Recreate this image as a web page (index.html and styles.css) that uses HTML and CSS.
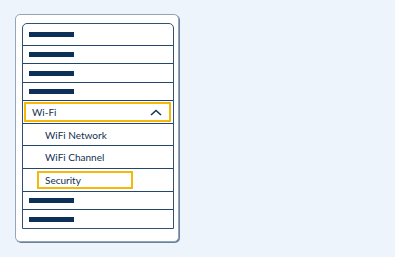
FILE: index.html
```html
<!DOCTYPE html>
<html>
<head>
<meta charset="utf-8">
<link rel="stylesheet" href="styles.css">
</head>
<body>
<div class="page">
  <div class="card">
    <div class="menu">
      <div class="row row-first"><span class="bar"></span></div>
      <div class="row row-bar"><span class="bar"></span></div>
      <div class="row row-bar row-tall"><span class="bar"></span></div>
      <div class="row row-bar"><span class="bar"></span></div>
      <div class="row row-head">
        <div class="head-box">
          <span class="label">Wi-Fi</span>
          <svg class="chev" width="12" height="7" viewBox="0 0 12 7"><path d="M1 6 L6 1.5 L11 6" fill="none" stroke="#1b3558" stroke-width="1.6"/></svg>
        </div>
      </div>
      <div class="row row-sub row-sub-short"><span class="label sub-label">WiFi Network</span></div>
      <div class="row row-sub"><span class="label sub-label">WiFi Channel</span></div>
      <div class="row row-sub"><div class="sel-box"><span class="label">Security</span></div></div>
      <div class="row row-bar"><span class="bar"></span></div>
      <div class="row row-bar row-tall"><span class="bar"></span></div>
    </div>
  </div>
</div>
</body>
</html>
```
FILE: styles.css
```css
html, body {
  margin: 0;
  padding: 0;
  background: #edf4fc;
}
.page {
  width: 395px;
  height: 257px;
  padding: 14px 0 0 15px;
  box-sizing: border-box;
}
.card {
  width: 164px;
  height: 228px;
  box-sizing: border-box;
  background: #fff;
  border: 1px solid #93a6b8;
  border-radius: 5px;
  box-shadow: 1px 1px 0 #6c8299;
  padding: 8px 5px 0 6px;
}
.menu {
  width: 152px;
  box-sizing: border-box;
  border: 1px solid #32506f;
  border-radius: 5px 5px 0 0;
  display: flex;
  flex-direction: column;
}
.row {
  display: flex;
  align-items: center;
  border-top: 1px solid #24466a;
  height: 17px;
  flex: none;
}
.row-first {
  border-top: none;
  height: 21px;
}
.row-tall {
  height: 18px;
}
.row-head,
.row-sub {
  height: 22px;
}
.row-sub-short {
  height: 21px;
}
.bar {
  display: block;
  width: 45px;
  height: 5px;
  margin-left: 6px;
  background: #0c3058;
}
.label {
  font-family: Lato, "Open Sans", sans-serif;
  font-weight: 400;
  font-size: 10px;
  color: #142f52;
}
.head-box {
  flex: none;
  width: 147px;
  height: 20px;
  box-sizing: border-box;
  margin-left: 1px;
  border: 2px solid #f7b80c;
  display: flex;
  align-items: center;
  justify-content: space-between;
  padding: 0 7px 0 6px;
}
.chev {
  display: block;
}
.sub-label {
  margin-left: 22px;
}
.sel-box {
  flex: none;
  width: 96px;
  height: 18px;
  box-sizing: border-box;
  margin-left: 14px;
  border: 2px solid #f7b80c;
  display: flex;
  align-items: center;
  padding-left: 6px;
}
```
